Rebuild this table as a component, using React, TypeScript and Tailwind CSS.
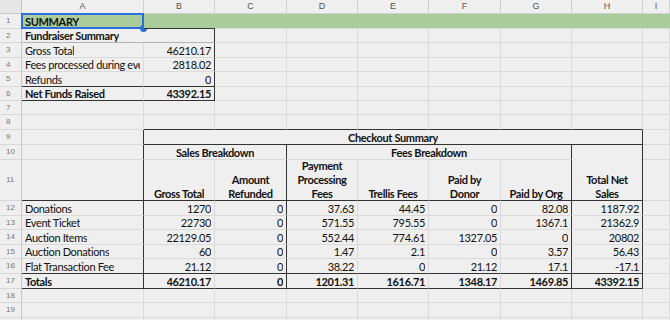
import type { ReactNode } from 'react';

type Cell = {
  t?: ReactNode;
  bold?: boolean;
  al?: 'l' | 'r' | 'c';
  r?: boolean; // dark right edge
  b?: boolean; // dark bottom edge
  noR?: boolean;
  span?: string;
  bg?: string;
  mid?: boolean;
};

const COLS = ['A', 'B', 'C', 'D', 'E', 'F', 'G', 'H', 'I'];
const e: Cell = {};

const row12 = [
  ['Donations', '1270', '0', '37.63', '44.45', '0', '82.08', '1187.92'],
  ['Event Ticket', '22730', '0', '571.55', '795.55', '0', '1367.1', '21362.9'],
  ['Auction Items', '22129.05', '0', '552.44', '774.61', '1327.05', '0', '20802'],
  ['Auction Donations', '60', '0', '1.47', '2.1', '0', '3.57', '56.43'],
  ['Flat Transaction Fee', '21.12', '0', '38.22', '0', '21.12', '17.1', '-17.1'],
];

function dataRow(v: string[], last: boolean, bold = false): Cell[] {
  return [
    { t: v[0], r: true, b: last, bold },
    { t: v[1], al: 'r', b: last, bold },
    { t: v[2], al: 'r', r: true, b: last, bold },
    { t: v[3], al: 'r', b: last, bold },
    { t: v[4], al: 'r', b: last, bold },
    { t: v[5], al: 'r', b: last, bold },
    { t: v[6], al: 'r', r: true, b: last, bold },
    { t: v[7], al: 'r', r: true, b: last, bold },
    e,
  ];
}

const green = { bg: 'green', noR: true } as Cell;

const ROWS: Cell[][] = [
  [{ t: 'SUMMARY', bold: true, bg: 'green', b: true }, { ...green, b: true }, green, green, green, green, green, green, green],
  [{ t: 'Fundraiser Summary', bold: true, noR: true, mid: true }, { r: true, mid: true }, e, e, e, e, e, e, e],
  [{ t: 'Gross Total' }, { t: '46210.17', al: 'r', r: true }, e, e, e, e, e, e, e],
  [{ t: 'Fees processed during event' }, { t: '2818.02', al: 'r', r: true }, e, e, e, e, e, e, e],
  [{ t: 'Refunds', b: true }, { t: '0', al: 'r', r: true, b: true }, e, e, e, e, e, e, e],
  [{ t: 'Net Funds Raised', bold: true, b: true }, { t: '43392.15', al: 'r', bold: true, r: true, b: true }, e, e, e, e, e, e, e],
  [e, e, e, e, e, e, e, e, e],
  [e, { b: true }, { b: true }, { b: true }, { b: true }, { b: true }, { b: true }, { b: true }, e],
  [{ r: true }, { t: 'Checkout Summary', bold: true, al: 'c', r: true, b: true, span: 'col-span-7' }, e],
  [
    { r: true },
    { t: 'Sales Breakdown', bold: true, al: 'c', r: true, span: 'col-span-2' },
    { t: 'Fees Breakdown', bold: true, al: 'c', r: true, span: 'col-span-4' },
    { t: ['Total Net', 'Sales'], bold: true, al: 'c', r: true, b: true, span: 'row-span-2' },
    e,
  ],
  [
    { r: true, b: true },
    { t: 'Gross Total', bold: true, al: 'c', b: true },
    { t: ['Amount', 'Refunded'], bold: true, al: 'c', r: true, b: true },
    { t: ['Payment', 'Processing', 'Fees'], bold: true, al: 'c', b: true },
    { t: 'Trellis Fees', bold: true, al: 'c', b: true },
    { t: ['Paid by', 'Donor'], bold: true, al: 'c', b: true },
    { t: 'Paid by Org', bold: true, al: 'c', r: true, b: true },
    e,
  ],
  ...row12.map((v, i) => dataRow(v, i === row12.length - 1)),
  dataRow(['Totals', '46210.17', '0', '1201.31', '1616.71', '1348.17', '1469.85', '43392.15'], true, true),
  [e, e, e, e, e, e, e, e, e],
  [e, e, e, e, e, e, e, e, e],
  [e, e, e, e, e, e, e, e, e],
];

function SheetCell({ c, sel }: { c: Cell; sel?: boolean }) {
  const lines = Array.isArray(c.t) ? (c.t as string[]) : null;
  return (
    <div
      className={[
        'relative flex min-w-0 items-end whitespace-nowrap border-b px-[3px] text-[11px] leading-[12px] tracking-[-0.35px] text-[#111]',
        c.span ?? '',
        c.noR ? 'border-r-0' : 'border-r',
        c.r ? 'border-r-[#333]' : 'border-r-[#dadada]',
        c.b ? 'border-b-[#333]' : c.mid ? 'border-b-[#b4b4b4]' : 'border-b-[#dadada]',
        c.bg === 'green' ? 'bg-[#aacb9b]' : '',
        c.bold ? 'font-bold' : '',
        c.al === 'r' ? 'justify-end' : c.al === 'c' ? 'justify-center' : 'justify-start',
      ].join(' ')}
    >
      {lines ? (
        <div className="flex translate-y-[1px] flex-col items-center leading-[14px]">
          {lines.map((l) => (
            <span key={l}>{l}</span>
          ))}
        </div>
      ) : (
        <span className="overflow-hidden">{c.t}</span>
      )}
      {sel && (
        <>
          <div className="absolute -top-px -left-px -right-px -bottom-px border-2 border-[#2b6fd9]" />
          <div className="absolute -right-[4px] -bottom-[4px] h-[7px] w-[7px] rounded-full bg-[#2b6fd9]" />
        </>
      )}
    </div>
  );
}

export default function App() {
  return (
    <div
      className="h-[320px] w-[670px] overflow-hidden bg-[#efefef]"
      style={{ fontFamily: 'Lato, "Open Sans", sans-serif' }}
    >
      <div className="grid grid-cols-[22px_122px_71px_72px_71px_71px_72px_71px_71px_1fr] grid-rows-[14px_15px_14px_15px_14px_15px_14px_14px_15px_15px_15px_41px_15px_14px_15px_14px_15px_15px_14px_15px_15px]">
        {/* column headers */}
        <div className="border-r border-b border-[#c6c6c6] bg-[#e6e6e6]" />
        {COLS.map((l) => (
          <div
            key={l}
            className="flex items-center justify-center border-r border-b border-[#d0d0d0] text-[9px] text-[#555]"
            style={{ fontFamily: '"Liberation Sans", Arial, sans-serif' }}
          >
            {l}
          </div>
        ))}
        {ROWS.map((row, ri) => [
          <div
            key={`h${ri}`}
            className="flex items-center border-r border-b border-r-[#c6c6c6] border-b-[#d8d8d8] pl-[6px] text-[8px] text-[#777]"
            style={{ fontFamily: '"Liberation Sans", Arial, sans-serif' }}
          >
            {ri < 19 ? ri + 1 : ''}
          </div>,
          ...row.map((c, ci) => <SheetCell key={`${ri}-${ci}`} c={c} sel={ri === 0 && ci === 0} />),
        ])}
      </div>
    </div>
  );
}
